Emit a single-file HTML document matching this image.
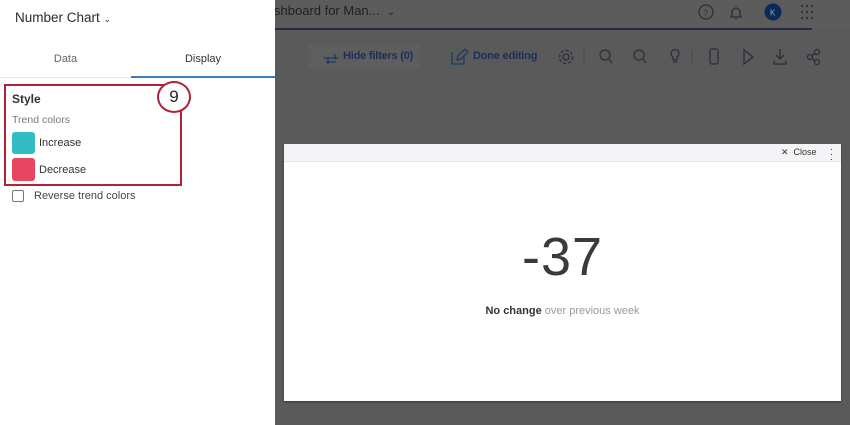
<!DOCTYPE html>
<html><head><meta charset="utf-8"><style>
*{margin:0;padding:0;box-sizing:border-box}
body{width:850px;height:425px;overflow:hidden;position:relative;font-family:"Liberation Sans",sans-serif;background:#5a5a5a}
.abs{position:absolute}
.panel{left:0;top:0;width:275px;height:425px;background:#fff}
.ic{stroke:#2b2f3a;fill:none;stroke-width:1.3}
</style></head><body>
<div class="abs" style="left:275px;top:0;width:575px;height:29px;background:#5c5c5c"></div>
<div class="abs" style="left:275px;top:28px;width:537px;height:2px;background:#262848"></div>
<div class="abs" style="left:274px;top:3px;font-size:13px;color:#1d1f26">shboard for Man...&nbsp;&nbsp;<span style="font-size:10px">&#8964;</span></div>
<svg class="abs" style="left:690px;top:0" width="140" height="26">
<circle cx="16" cy="12" r="7" class="ic"/><text x="13" y="16" font-size="9" fill="#2b2f3a" font-family="Liberation Sans">?</text>
<path d="M40 17h12M42 17v-5a4 4 0 0 1 8 0v5M45 19h2" class="ic"/>
<circle cx="83" cy="12" r="8.5" fill="#0a2a5a"/><text x="80" y="15.5" font-size="8" fill="#9ab" font-family="Liberation Sans">K</text>
<g fill="#2b2f3a"><circle cx="112" cy="6" r="1.1"/><circle cx="117" cy="6" r="1.1"/><circle cx="122" cy="6" r="1.1"/><circle cx="112" cy="12" r="1.1"/><circle cx="117" cy="12" r="1.1"/><circle cx="122" cy="12" r="1.1"/><circle cx="112" cy="18" r="1.1"/><circle cx="117" cy="18" r="1.1"/><circle cx="122" cy="18" r="1.1"/></g>
</svg>
<div class="abs" style="left:308px;top:45px;width:112px;height:24px;background:#5e5e5e;border-radius:2px"></div>
<svg class="abs" style="left:322px;top:48px" width="20" height="18"><path d="M2 10h14M4 14h10M13 6v6M6 10v6" stroke="#1a3a6a" fill="none" stroke-width="1.3"/></svg>
<div class="abs" style="left:343px;top:50px;font-size:11px;color:#1a3058;font-weight:bold;letter-spacing:-0.2px">Hide filters (0)</div>
<svg class="abs" style="left:449px;top:47px" width="20" height="20"><path d="M3 5v12h12v-7M8 13l1-4 7-7 3 3-7 7z" stroke="#1a3a6a" fill="none" stroke-width="1.3"/></svg>
<div class="abs" style="left:473px;top:50px;font-size:11px;color:#1a3058;font-weight:bold;letter-spacing:-0.2px">Done editing</div>
<svg class="abs" style="left:555px;top:45px" width="290" height="24">
<circle cx="11" cy="12" r="3" class="ic"/><circle cx="11" cy="12" r="6.5" class="ic" stroke-dasharray="3 2"/>
<path d="M29 5v14" stroke="#4a4a4a" />
<circle cx="50" cy="10" r="5" class="ic"/><path d="M54 14l3 4" class="ic"/>
<circle cx="84" cy="10" r="5" class="ic"/><path d="M88 14l3 4" class="ic"/>
<path d="M116 8a4 4 0 1 1 6 4v3h-4v-3a4 4 0 0 1-2-4M118 17h4" class="ic"/>
<path d="M137 5v14" stroke="#4a4a4a"/>
<rect x="155" y="4" width="8" height="15" rx="2" class="ic"/>
<path d="M189 5l9 7-9 7z" class="ic"/>
<path d="M225 4v10M221 10l4 4 4-4M219 16v3h12v-3" class="ic"/>
<circle cx="255" cy="12" r="2.5" class="ic"/><circle cx="262" cy="7" r="2.5" class="ic"/><circle cx="262" cy="17" r="2.5" class="ic"/><path d="M257 11l3-3M257 13l3 3" class="ic"/>
</svg>
<div class="abs" style="left:284px;top:144px;width:557px;height:257px;background:#fff;box-shadow:0 1px 2px rgba(0,0,0,.4)"></div>
<div class="abs" style="left:284px;top:144px;width:557px;height:18px;background:#f4f4f6;border-bottom:1px solid #e2e2e6"></div>
<div class="abs" style="left:781px;top:147px;font-size:9px;color:#333">&#10005;&nbsp; Close</div>
<div class="abs" style="left:830px;top:145px;font-size:10px;color:#333;line-height:5px">.<br>.<br>.</div>
<div class="abs" style="left:284px;top:226px;width:557px;text-align:center;font-size:54px;color:#3a3a3a;letter-spacing:1px">-37</div>
<div class="abs" style="left:284px;top:305px;width:557px;text-align:center;font-size:11px;color:#999"><b style="color:#333">No change</b> over previous week</div>
<div class="abs panel"></div>
<div class="abs" style="left:15px;top:10px;font-size:13.5px;color:#2b2b2b">Number Chart <span style="font-size:9px">&#8964;</span></div>
<div class="abs" style="left:0;top:53px;width:131px;text-align:center;font-size:11px;color:#666">Data</div>
<div class="abs" style="left:131px;top:53px;width:144px;text-align:center;font-size:11px;color:#333">Display</div>
<div class="abs" style="left:0;top:77px;width:131px;height:1px;background:#e4e4e4"></div>
<div class="abs" style="left:131px;top:76px;width:144px;height:2px;background:#3a7fc0"></div>
<div class="abs" style="left:4px;top:84px;width:178px;height:102px;border:2px solid #b0213a"></div>
<div class="abs" style="left:157px;top:81px;width:34px;height:32px;border:2px solid #b0213a;border-radius:50%;background:#fff;text-align:center;font-size:17px;line-height:28px;color:#222">9</div>
<div class="abs" style="left:12px;top:92px;font-size:12px;font-weight:bold;color:#333">Style</div>
<div class="abs" style="left:12px;top:114px;font-size:10.5px;color:#777">Trend colors</div>
<div class="abs" style="left:12px;top:132px;width:23px;height:22px;border-radius:3px;background:#34bcc4"></div>
<div class="abs" style="left:39px;top:137px;font-size:11px;color:#333">Increase</div>
<div class="abs" style="left:12px;top:158px;width:23px;height:23px;border-radius:3px;background:#e84560"></div>
<div class="abs" style="left:39px;top:164px;font-size:11px;color:#333">Decrease</div>
<div class="abs" style="left:12px;top:190px;width:12px;height:12px;border:1px solid #777;border-radius:2px"></div>
<div class="abs" style="left:34px;top:190px;font-size:11px;color:#444">Reverse trend colors</div>
</body></html>
